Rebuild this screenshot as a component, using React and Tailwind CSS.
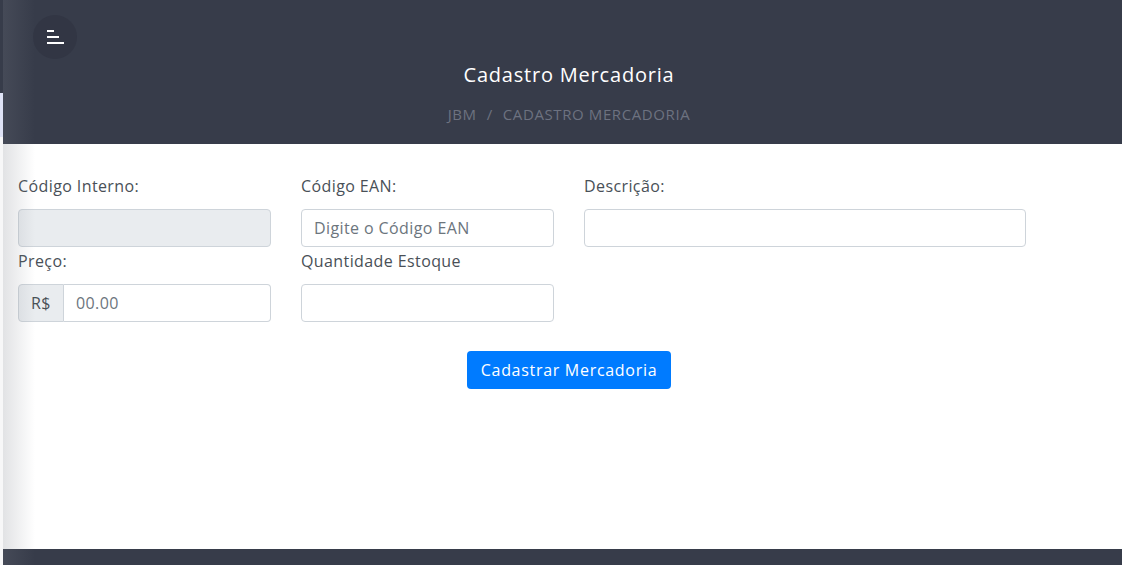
const font = { fontFamily: '"Open Sans", "Noto Sans", sans-serif' };

function Field({ label, width = "w-[253px]", children }) {
  return (
    <div className={`${width} flex flex-col`}>
      <label className="h-6 leading-6 text-[16px] tracking-[0.4px] text-[#495057]">{label}</label>
      <div className="mt-[11px]">{children}</div>
    </div>
  );
}

const inputBase =
  "w-full h-[38px] rounded border border-[#ced4da] px-3 text-[16px] tracking-[0.4px] text-[#495057] placeholder:text-[#6c757d] outline-none";

export default function App() {
  return (
    <div className="relative w-[1122px] h-[565px] overflow-hidden bg-white" style={font}>
      {/* strip on the far left, from the page underneath */}
      <div className="absolute left-0 top-0 w-[3px] h-full flex flex-col">
        <div className="h-[93px] bg-[#373c4a]" />
        <div className="h-[44px] bg-[#dfe3f6]" />
        <div className="flex-1 bg-[#f7f7f8]" />
      </div>

      <div className="ml-[3px] w-[1132px] h-full flex flex-col">
        <header className="h-[144px] bg-[#373c4a] flex flex-col items-center">
          <div className="self-start ml-[30px] mt-[15px] w-11 h-11 rounded-full bg-[#323644] flex flex-col justify-center gap-[4px] pl-[14px]">
            <span className="block w-[7px] h-[2px] bg-white" />
            <span className="block w-[12px] h-[2px] bg-white" />
            <span className="block w-[17px] h-[2px] bg-white" />
          </div>
          <h1 className="mt-[2px] text-[20px] leading-7 tracking-[0.8px] text-white">Cadastro Mercadoria</h1>
          <nav className="mt-[13px] text-[15px] leading-6 tracking-[0.6px] text-[#6d7280] flex gap-[10px]">
            <span>JBM</span>
            <span>/</span>
            <span>CADASTRO MERCADORIA</span>
          </nav>
        </header>

        <main className="flex-1 px-[15px] pt-[30px]">
          <div className="flex gap-[30px]">
            <Field label="Código Interno:">
              <input disabled className={`${inputBase} bg-[#e9ecef]`} />
            </Field>
            <Field label="Código EAN:">
              <input className={`${inputBase} bg-white`} placeholder="Digite o Código EAN" />
            </Field>
            <Field label="Descrição:" width="w-[442px]">
              <input className={`${inputBase} bg-white`} />
            </Field>
          </div>

          <div className="flex gap-[30px] mt-[2px]">
            <Field label="Preço:">
              <div className="flex h-[38px]">
                <span className="w-[46px] flex items-center justify-center rounded-l border border-[#ced4da] bg-[#e9ecef] text-[16px] tracking-[0.4px] text-[#495057]">
                  R$
                </span>
                <input
                  className="flex-1 min-w-0 h-[38px] rounded-r border border-l-0 border-[#ced4da] px-3 text-[16px] tracking-[0.4px] placeholder:text-[#6c757d] outline-none"
                  placeholder="00.00"
                />
              </div>
            </Field>
            <Field label="Quantidade Estoque">
              <input className={`${inputBase} bg-white`} />
            </Field>
          </div>

          <div className="flex justify-center mt-[29px]">
            <button className="h-[38px] w-[204px] rounded bg-[#007bff] text-[16px] tracking-[0.7px] text-white">
              Cadastrar Mercadoria
            </button>
          </div>
        </main>

        <footer className="h-[16px] bg-[#373c4a]" />
      </div>

      {/* sidebar shadow */}
      <div className="absolute left-[3px] top-0 w-[32px] h-full bg-gradient-to-r from-[rgba(120,124,135,0.22)] to-transparent pointer-events-none" />
    </div>
  );
}
